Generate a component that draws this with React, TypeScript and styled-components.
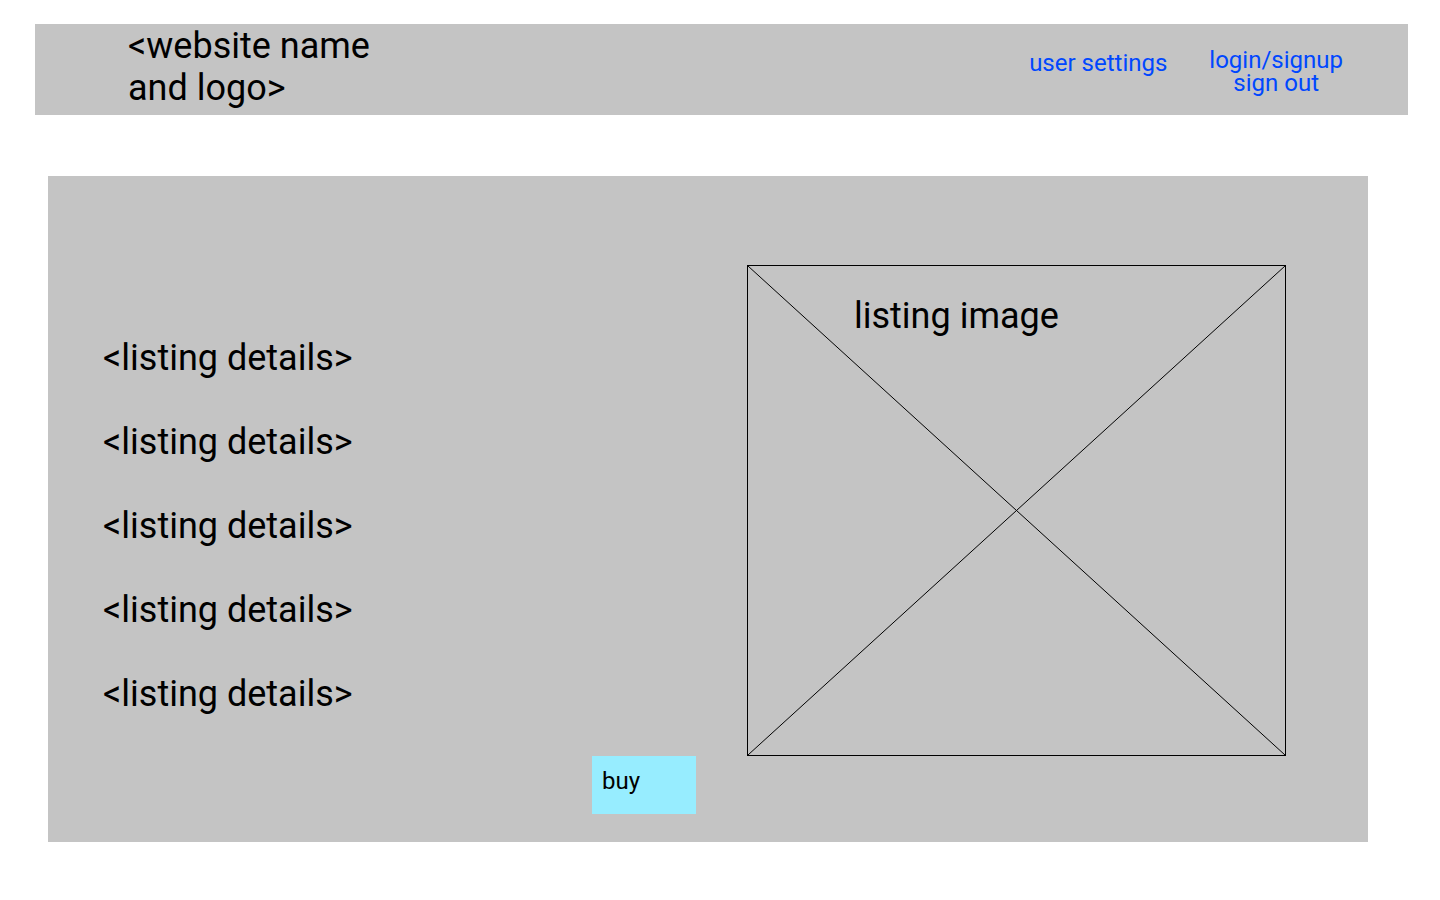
import React from "react";
import styled, { createGlobalStyle } from "styled-components";

const GlobalStyle = createGlobalStyle`
  body {
    margin: 0;
    background: #ffffff;
    font-family: Roboto, "Liberation Sans", sans-serif;
    color: #000000;
  }
`;

const Page = styled.div`
  width: 1440px;
  height: 900px;
  padding-top: 24px;
  box-sizing: border-box;
`;

const Header = styled.header`
  display: flex;
  justify-content: space-between;
  align-items: flex-start;
  margin-left: 35px;
  width: 1373px;
  height: 91px;
  background: #c4c4c4;
  padding: 1px 65px 0 93px;
  box-sizing: border-box;
`;

const SiteName = styled.div`
  font-size: 36px;
  line-height: 42px;
  white-space: pre-line;
`;

const Nav = styled.nav`
  display: flex;
  gap: 42px;
  align-items: flex-start;
`;

const NavLink = styled.a<{ $top: number }>`
  display: block;
  margin-top: ${(p) => p.$top}px;
  color: #0047ff;
  font-size: 24px;
  line-height: 23px;
  text-align: center;
  text-decoration: none;
  cursor: pointer;
`;

const Panel = styled.main`
  display: flex;
  margin: 61px 0 0 48px;
  width: 1320px;
  height: 666px;
  background: #c4c4c4;
`;

const DetailsColumn = styled.section`
  display: flex;
  flex-direction: column;
  gap: 42px;
  width: 699px;
  padding: 161px 51px 0 55px;
  box-sizing: border-box;
`;

const Detail = styled.div`
  font-size: 36px;
  line-height: 42px;
`;

const BuyButton = styled.button`
  align-self: flex-end;
  margin-top: -1px;
  width: 104px;
  height: 58px;
  border: none;
  background: #97edff;
  padding: 12px 10px 0;
  display: flex;
  align-items: flex-start;
  font-family: Roboto, "Liberation Sans", sans-serif;
  font-size: 24px;
  line-height: 26px;
  color: #000000;
  cursor: pointer;
`;

const ImageBox = styled.div`
  position: relative;
  margin-top: 89px;
  width: 539px;
  height: 491px;
  border: 1px solid #000000;
  box-sizing: border-box;
  padding: 29px 0 0 106px;
  font-size: 36px;
  line-height: 42px;
`;

const Cross = styled.svg`
  position: absolute;
  inset: 0;
  width: 100%;
  height: 100%;
`;

const Caption = styled.span`
  position: relative;
`;

const details = [1, 2, 3, 4, 5];

const App = () => {
  return (
    <Page>
      <GlobalStyle />
      <Header>
        <SiteName>{"<website name\nand logo>"}</SiteName>
        <Nav>
          <NavLink $top={27}>user settings</NavLink>
          <NavLink $top={24}>
            login/signup
            <br />
            sign out
          </NavLink>
        </Nav>
      </Header>
      <Panel>
        <DetailsColumn>
          {details.map((d) => (
            <Detail key={d}>{"<listing details>"}</Detail>
          ))}
          <BuyButton>buy</BuyButton>
        </DetailsColumn>
        <ImageBox>
          <Cross viewBox="0 0 100 100" preserveAspectRatio="none">
            <line x1="0" y1="0" x2="100" y2="100" stroke="#000" strokeWidth="1" vectorEffect="non-scaling-stroke" />
            <line x1="100" y1="0" x2="0" y2="100" stroke="#000" strokeWidth="1" vectorEffect="non-scaling-stroke" />
          </Cross>
          <Caption>listing image</Caption>
        </ImageBox>
      </Panel>
    </Page>
  );
};

export default App;
